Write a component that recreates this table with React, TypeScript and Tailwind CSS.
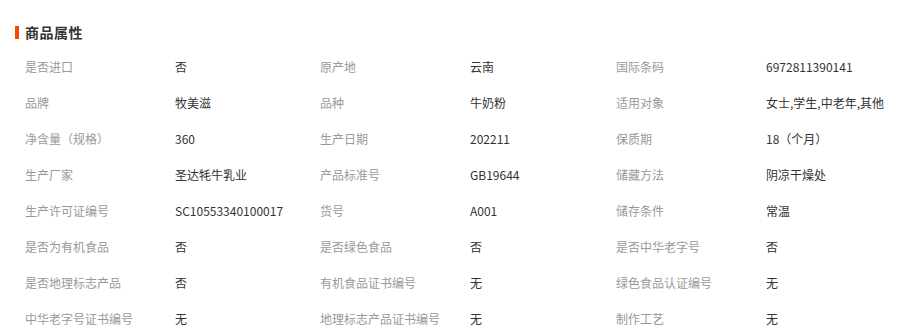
import React from "react";

const rows: [string, string][][] = [
  [["是否进口", "否"], ["原产地", "云南"], ["国际条码", "6972811390141"]],
  [["品牌", "牧美滋"], ["品种", "牛奶粉"], ["适用对象", "女士,学生,中老年,其他"]],
  [["净含量（规格）", "360"], ["生产日期", "202211"], ["保质期", "18（个月）"]],
  [["生产厂家", "圣达牦牛乳业"], ["产品标准号", "GB19644"], ["储藏方法", "阴凉干燥处"]],
  [["生产许可证编号", "SC10553340100017"], ["货号", "A001"], ["储存条件", "常温"]],
  [["是否为有机食品", "否"], ["是否绿色食品", "否"], ["是否中华老字号", "否"]],
  [["是否地理标志产品", "否"], ["有机食品证书编号", "无"], ["绿色食品认证编号", "无"]],
  [["中华老字号证书编号", "无"], ["地理标志产品证书编号", "无"], ["制作工艺", "无"]],
];

export default function App() {
  return (
    <div
      className="w-[906px] h-[336px] overflow-hidden bg-white"
      style={{ fontFamily: '"Noto Sans CJK SC", "Noto Sans", sans-serif' }}
    >
      <div className="flex items-center pl-[15px] pt-[22px] h-[42px]">
        <div className="w-[4px] h-[13px] bg-[#ff4400]" />
        <div className="ml-[6px] text-[14px] leading-[20px] font-bold text-[#333] tracking-[0.5px]">商品属性</div>
      </div>
      <div className="mt-[7px] pl-[25px]">
        {rows.map((row, i) => (
          <div key={i} className="grid grid-cols-[295px_296px_1fr] h-[36px] items-center text-[12px] leading-[16px]">
            {row.map(([k, v], j) => (
              <div key={j} className="flex">
                <div className="w-[150px] shrink-0 text-[#999] whitespace-nowrap">{k}</div>
                <div className="text-[#333] whitespace-nowrap">{v}</div>
              </div>
            ))}
          </div>
        ))}
      </div>
    </div>
  );
}
